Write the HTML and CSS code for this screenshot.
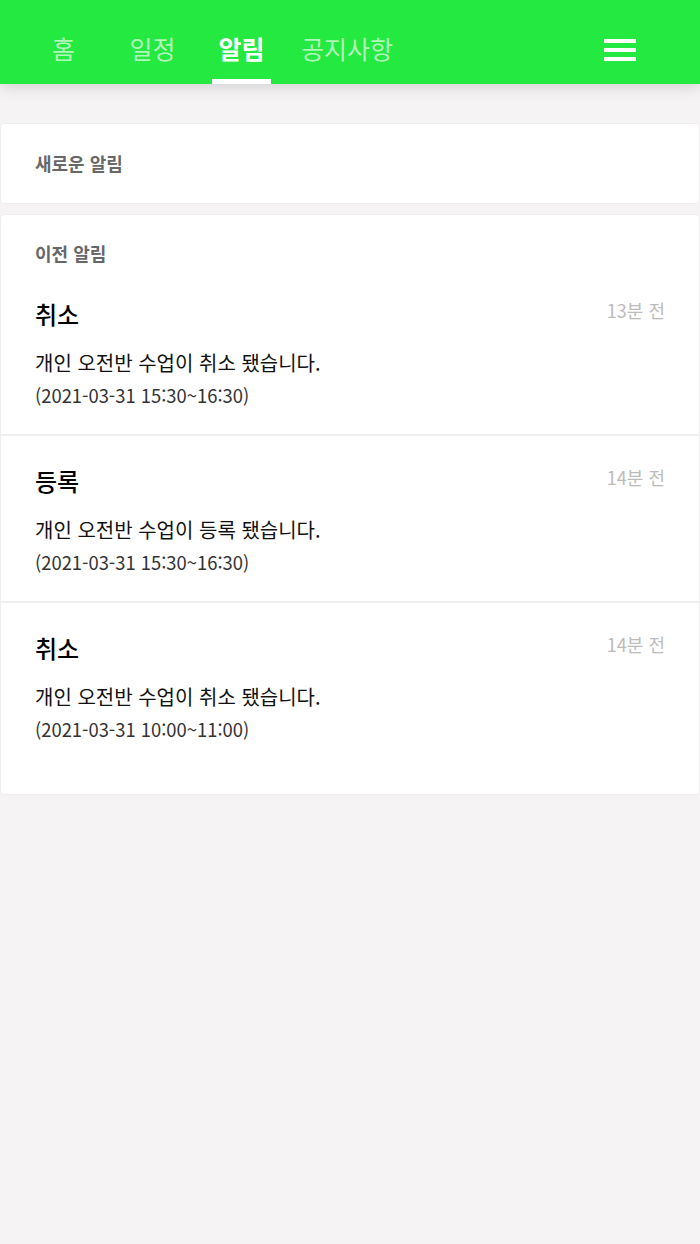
FILE: index.html
```html
<!DOCTYPE html>
<html lang="ko">
<head>
    <meta charset="UTF-8">
    <meta name="viewport" content="width=device-width, initial-scale=1.0">
    <title>알림</title>
    <link rel="stylesheet" href="styles.css">
</head>
<body>
    <header class="topbar">
        <nav class="tabs">
            <a class="tab">홈</a>
            <a class="tab">일정</a>
            <a class="tab active">알림</a>
            <a class="tab">공지사항</a>
        </nav>
        <button class="menu-btn" aria-label="메뉴">
            <span></span><span></span><span></span>
        </button>
    </header>

    <main class="content">
        <!-- 새로운 알림 -->
        <section class="card">
            <h2 class="card-label">새로운 알림</h2>
        </section>

        <!-- 이전 알림 -->
        <section class="card card-list">
            <h2 class="card-label">이전 알림</h2>

            <div class="noti">
                <div class="noti-head">
                    <h3 class="noti-title">취소</h3>
                    <span class="noti-time">13분 전</span>
                </div>
                <p class="noti-msg">개인 오전반 수업이 취소 됐습니다.</p>
                <p class="noti-date">(2021-03-31 15:30~16:30)</p>
            </div>

            <div class="noti">
                <div class="noti-head">
                    <h3 class="noti-title">등록</h3>
                    <span class="noti-time">14분 전</span>
                </div>
                <p class="noti-msg">개인 오전반 수업이 등록 됐습니다.</p>
                <p class="noti-date">(2021-03-31 15:30~16:30)</p>
            </div>

            <div class="noti">
                <div class="noti-head">
                    <h3 class="noti-title">취소</h3>
                    <span class="noti-time">14분 전</span>
                </div>
                <p class="noti-msg">개인 오전반 수업이 취소 됐습니다.</p>
                <p class="noti-date">(2021-03-31 10:00~11:00)</p>
            </div>
        </section>
    </main>
</body>
</html>
```

FILE: styles.css
```css
body {
    margin: 0;
    padding: 0;
    background: #f5f3f4;
    font-family: "Noto Sans CJK KR", "Noto Sans", sans-serif;
    color: #111;
}
.topbar {
    position: relative;
    z-index: 2;
    height: 84px;
    background: #24e940;
    display: flex;
    align-items: stretch;
    justify-content: space-between;
    box-shadow: 0 3px 14px rgba(0, 0, 0, 0.14);
}
.tabs {
    display: flex;
    gap: 30px;
    padding-left: 34px;
}
.tab {
    min-width: 59px;
    height: 84px;
    box-sizing: border-box;
    text-align: center;
    font-size: 25px;
    line-height: 96px;
    color: rgba(255, 255, 255, 0.66);
    border-bottom: 5px solid transparent;
}
.tab.active {
    color: #fff;
    font-weight: bold;
    border-bottom-color: #fff;
}
.menu-btn {
    background: none;
    border: none;
    padding: 16px 0 0;
    margin-right: 64px;
    width: 32px;
    display: flex;
    flex-direction: column;
    justify-content: center;
    gap: 5.5px;
    cursor: pointer;
}
.menu-btn span {
    display: block;
    width: 32px;
    height: 3.5px;
    background: #fff;
}
.content {
    padding-top: 39px;
}
.card {
    background: #fff;
    border: 1px solid #efeeee;
    border-radius: 4px;
    margin-bottom: 10px;
}
.card-label {
    margin: 0;
    padding: 26px 34px 27px;
    font-size: 18px;
    line-height: 26px;
    font-weight: bold;
    color: #676767;
}
.card-list {
    padding-bottom: 26px;
}
.card-list .card-label {
    padding: 25px 34px 3px;
}
.noti {
    padding: 28px 34px 23px;
    border-bottom: 2px solid #efefef;
}
.noti:last-child {
    border-bottom: none;
}
.noti-head {
    display: flex;
    justify-content: space-between;
    align-items: flex-start;
    margin-bottom: 16px;
}
.noti-title {
    margin: 0;
    font-size: 24px;
    line-height: 34px;
    font-weight: 500;
    color: #000;
}
.noti-time {
    font-size: 18px;
    line-height: 26px;
    color: #bbb;
}
.noti-msg {
    margin: 0;
    font-size: 20px;
    line-height: 32px;
    color: #111;
}
.noti-date {
    margin: 0;
    font-size: 18.4px;
    line-height: 32px;
    color: #333;
}
```
